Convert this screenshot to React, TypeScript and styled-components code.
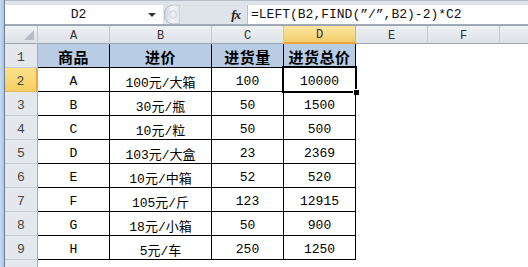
import React from 'react';
import styled, { createGlobalStyle, css } from 'styled-components';

const GlobalStyle = createGlobalStyle`
  html, body { margin: 0; padding: 0; background: #fff; }
  * { box-sizing: border-box; }
`;

const MONO = `"Liberation Mono", "Noto Sans CJK SC", monospace`;

const Window = styled.div`
  width: 528px;
  height: 267px;
  overflow: hidden;
  display: flex;
  background: #fff;
`;

const Frame = styled.div`
  width: 5px;
  flex-shrink: 0;
  background: linear-gradient(90deg, #c4dbf3, #a9c6e8);
  border-right: 1px solid #6d7f96;
`;

const Main = styled.div`
  flex: 1;
  display: flex;
  flex-direction: column;
  min-width: 0;
  overflow: hidden;
`;

const RibbonEdge = styled.div`
  height: 4px;
  display: flex;
  background: #e6e9ee;
  border-bottom: 1px solid #b4bcc7;
`;

const RibbonGroup = styled.div<{ $w: number }>`
  width: ${p => p.$w}px;
  flex-shrink: 0;
  border-right: 1px solid #c3c9d1;
`;

const FormulaBar = styled.div`
  height: 24px;
  display: flex;
  align-items: stretch;
  padding-top: 4px;
  background: #dfe4ea;
  border-bottom: 1px solid #a3abb6;
`;

const NameBox = styled.div`
  width: 158px;
  background: #fff;
  display: flex;
  align-items: center;
  font-family: ${MONO};
  font-size: 13px;
  color: #111;
`;

const NameText = styled.span`
  flex: 1;
  text-align: center;
  padding-left: 4px;
`;

const DropArrow = styled.span`
  width: 0;
  height: 0;
  margin-right: 7px;
  border-left: 4px solid transparent;
  border-right: 4px solid transparent;
  border-top: 4px solid #333;
`;

const Middle = styled.div`
  width: 84px;
  display: flex;
  align-items: center;
  justify-content: space-between;
  padding: 0 7px 0 1px;
`;

const Fx = styled.span`
  font-family: "Liberation Serif", serif;
  font-style: italic;
  font-weight: bold;
  font-size: 13px;
  color: #222;
  letter-spacing: -1px;
`;

const FormulaInput = styled.div`
  flex: 1;
  background: #fff;
  border-left: 1px solid #b7bec8;
  display: flex;
  align-items: center;
  padding-left: 3px;
  font-family: ${MONO};
  font-size: 13px;
  color: #111;
  white-space: nowrap;
`;

const Gap = styled.div`
  height: 3px;
  background: #dfe4ea;
  border-bottom: 1px solid #9aa3ae;
`;

const Sheet = styled.div`
  display: grid;
  grid-template-columns: 33px 72px 102px 72px 72px 72px 72px 72px;
  grid-auto-rows: 24px;
  grid-template-rows: 18px;
`;

const ColHead = styled.div<{ $active?: boolean }>`
  display: flex;
  align-items: center;
  justify-content: center;
  padding-top: 2px;
  font-family: ${MONO};
  font-size: 12px;
  color: #333;
  background: linear-gradient(#eef1f4, #dde2e8);
  border-right: 1px solid #c2c8d0;
  border-bottom: 1px solid #9da6b1;
  ${p =>
    p.$active &&
    css`
      background: linear-gradient(#fbe6a2, #f5cd6a);
      border-right-color: #e5b356;
      border-bottom: 2px solid #f0a63a;
    `}
`;

const Corner = styled(ColHead)`
  position: relative;
  &::after {
    content: '';
    position: absolute;
    right: 3px;
    bottom: 3px;
    border-left: 10px solid transparent;
    border-bottom: 10px solid #b6bdc6;
  }
`;

const RowHead = styled.div<{ $active?: boolean }>`
  display: flex;
  align-items: center;
  justify-content: center;
  padding-top: 4px;
  font-family: ${MONO};
  font-size: 13px;
  color: #444;
  background: #e4e8ed;
  border-right: 1px solid #9fb0c4;
  border-bottom: 1px solid #c5ccd5;
  ${p =>
    p.$active &&
    css`
      background: linear-gradient(#fbe08a, #f7cf62);
      border-right: 2px solid #f0a63a;
      border-bottom-color: #e3b660;
    `}
`;

const Cell = styled.div<{ $head?: boolean; $table?: boolean }>`
  position: relative;
  display: flex;
  align-items: center;
  justify-content: center;
  padding-top: 3px;
  font-family: ${MONO};
  font-size: 13px;
  color: #000;
  white-space: nowrap;
  ${p =>
    p.$table &&
    css`
      border-right: 1px solid #000;
      border-bottom: 1px solid #000;
    `}
  ${p =>
    p.$head &&
    css`
      background: #b8cce4;
      font-family: "Noto Sans CJK SC", sans-serif;
      font-weight: bold;
      font-size: 15px;
      padding-top: 1px;
      letter-spacing: 0.5px;
    `}
`;

const Selection = styled.div`
  position: absolute;
  top: -2px;
  left: -2px;
  right: -2px;
  bottom: -2px;
  border: 2px solid #000;
  box-shadow: inset 0 0 0 1px #fff;
  pointer-events: none;
`;

const FillHandle = styled.div`
  position: absolute;
  right: -5px;
  bottom: -5px;
  width: 7px;
  height: 7px;
  background: #000;
  border: 1px solid #fff;
`;

const Splitter = () => (
  <svg width="16" height="19" viewBox="0 0 16 19">
    <defs>
      <linearGradient id="sp" x1="0" y1="0" x2="1" y2="0">
        <stop offset="0" stopColor="#c9ced6" />
        <stop offset="0.5" stopColor="#f4f6f8" />
        <stop offset="1" stopColor="#dfe3e8" />
      </linearGradient>
    </defs>
    <path d="M9 0 A9 9.5 0 0 0 9 19 L16 19 L16 0 Z" fill="url(#sp)" stroke="#b5bcc6" />
    <ellipse cx="9" cy="9.5" rx="3.5" ry="4" fill="#e9ecf0" stroke="#d0d5dc" />
  </svg>
);

const cols = ['A', 'B', 'C', 'D', 'E', 'F', 'G'];
const header = ['商品', '进价', '进货量', '进货总价'];
const rows = [
  ['A', '100元/大箱', '100', '10000'],
  ['B', '30元/瓶', '50', '1500'],
  ['C', '10元/粒', '50', '500'],
  ['D', '103元/大盒', '23', '2369'],
  ['E', '10元/中箱', '52', '520'],
  ['F', '105元/斤', '123', '12915'],
  ['G', '18元/小箱', '50', '900'],
  ['H', '5元/车', '250', '1250'],
];

const App: React.FC = () => (
  <Window>
    <GlobalStyle />
    <Frame />
    <Main>
      <RibbonEdge>
        <RibbonGroup $w={80} />
        <RibbonGroup $w={255} />
      </RibbonEdge>
      <FormulaBar>
        <NameBox>
          <NameText>D2</NameText>
          <DropArrow />
        </NameBox>
        <Middle>
          <Splitter />
          <Fx>fx</Fx>
        </Middle>
        <FormulaInput>=LEFT(B2,FIND(”/”,B2)-2)*C2</FormulaInput>
      </FormulaBar>
      <Gap />
      <Sheet>
        <Corner />
        {cols.map(c => (
          <ColHead key={c} $active={c === 'D'}>
            {c === 'G' ? '' : c}
          </ColHead>
        ))}
        <RowHead>1</RowHead>
        {header.map(h => (
          <Cell key={h} $head $table>
            {h}
          </Cell>
        ))}
        <Cell />
        <Cell />
        <Cell />
        {rows.map((r, i) => (
          <React.Fragment key={r[0]}>
            <RowHead $active={i === 0}>{i + 2}</RowHead>
            {r.map((v, j) => (
              <Cell key={j} $table>
                {v}
                {i === 0 && j === 3 && (
                  <Selection>
                    <FillHandle />
                  </Selection>
                )}
              </Cell>
            ))}
            <Cell />
            <Cell />
            <Cell />
          </React.Fragment>
        ))}
        <RowHead />
      </Sheet>
    </Main>
  </Window>
);

export default App;
